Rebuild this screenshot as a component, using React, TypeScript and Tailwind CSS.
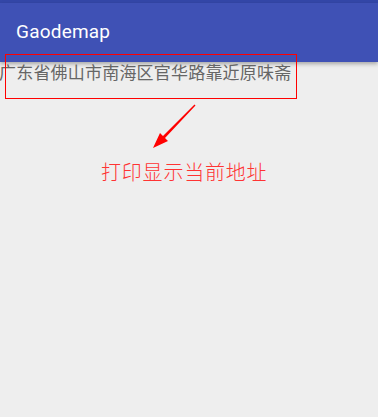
export default function App() {
  return (
    <div className="relative w-[378px] h-[417px] bg-[#eeeeee] overflow-hidden" style={{ fontFamily: 'Roboto, "Noto Sans CJK SC", sans-serif' }}>
      <div className="h-[3px] bg-[#3447a8]" />
      <div className="h-[59px] bg-[#3f51b5] flex items-center pl-4 shadow-[0_2px_4px_rgba(0,0,0,0.3)]">
        <span className="text-white text-[19px] font-normal tracking-[0.2px]">Gaodemap</span>
      </div>
      <div className="-mt-[1px] -ml-[1px] text-[17px] tracking-[0.2px] leading-[22px] text-[#666666] whitespace-nowrap" style={{ fontFamily: '"Noto Sans CJK SC", sans-serif' }}>
        广东省佛山市南海区官华路靠近原味斋
      </div>
      <div className="absolute left-[5px] top-[54px] w-[292px] h-[45px] border border-[#ff0000]" />
      <svg className="absolute left-0 top-0" width="378" height="417">
        <polygon points="194.5,104.5 195.5,105.5 165,138 168,141 153,148 160,133 163,136" fill="#ff0000" />
      </svg>
      <div className="absolute left-[101px] top-[158px] text-[20px] tracking-[0.8px] leading-[28px] text-[#ff3333]" style={{ fontFamily: '"Noto Sans CJK SC", sans-serif', fontWeight: 300 }}>
        打印显示当前地址
      </div>
    </div>
  );
}
